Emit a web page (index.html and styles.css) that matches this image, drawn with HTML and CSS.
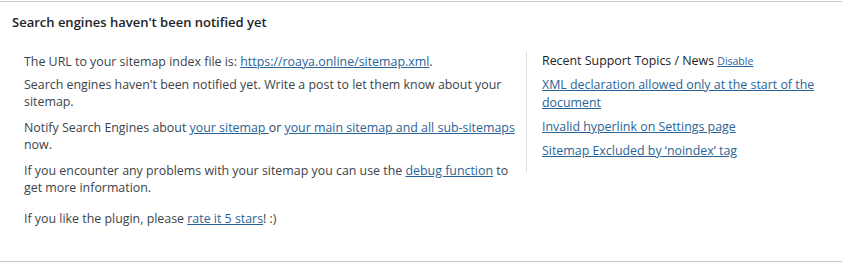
FILE: index.html
```html
<!DOCTYPE html>
<html lang="en">
<head>
<meta charset="utf-8">
<title>Sitemap status</title>
<link rel="stylesheet" href="styles.css">
</head>
<body>
<div class="postbox">
  <h2 class="hndle">Search engines haven't been notified yet</h2>
  <div class="inside">
    <div class="main">
      <p class="first">The URL to your sitemap index file is: <a href="#">https://roaya.online/sitemap.xml</a>.</p>
      <p>Search engines haven't been notified yet. Write a post to let them know about your sitemap.</p>
      <p>Notify Search Engines about <a href="#">your sitemap </a>or <a href="#">your main sitemap and all sub-sitemaps</a> now.</p>
      <p>If you encounter any problems with your sitemap you can use the <a href="#">debug function</a> to get more information.</p>
      <p class="rate">If you like the plugin, please <a href="#">rate it 5 stars</a>! :)</p>
    </div>
    <div class="side">
      <div class="side-title">Recent Support Topics / News <a href="#" class="small">Disable</a></div>
      <ul class="topics">
        <li><a href="#">XML declaration allowed only at the start of the document</a></li>
        <li><a href="#">Invalid hyperlink on Settings page</a></li>
        <li><a href="#">Sitemap Excluded by ‘noindex’ tag</a></li>
      </ul>
    </div>
  </div>
</div>
</body>
</html>
```
FILE: styles.css
```css
html, body {
  margin: 0;
  padding: 0;
  background: #fff;
}
body {
  font-family: "Open Sans", "Noto Sans", "Liberation Sans", sans-serif;
  font-size: 12.4px;
  color: #3c434a;
}
.postbox {
  margin-top: 1px;
  height: 259px;
  border-top: 1px solid #c9cacc;
  border-bottom: 1px solid #c3c4c7;
}
.hndle {
  margin: 0;
  padding: 11px 12px 0;
  font-size: 13px;
  font-weight: 600;
  line-height: 19px;
  color: #1d2327;
}
.inside {
  display: flex;
  align-items: flex-start;
  padding: 21px 12px 0 24px;
}
.main {
  width: 494px;
  flex: none;
}
.main p {
  margin: 0 0 9px;
  line-height: 17px;
}
.main p.first {
  margin-bottom: 6px;
}
.main p.rate {
  margin-top: 14px;
}
a {
  color: #2a6496;
  text-decoration: underline;
}
.side {
  margin-left: 8px;
  border-left: 1px solid #dcdcde;
  padding: 0 0 6px 15px;
  margin-top: -1px;
  flex: 1;
}
.side-title {
  line-height: 18px;
  font-weight: 400;
  color: #1d2327;
  margin-bottom: 6px;
}
.side-title .small {
  font-size: 10.5px;
}
.topics {
  list-style: none;
  margin: 0;
  padding: 0;
  width: 284px;
}
.topics li {
  margin: 0 0 6px;
  line-height: 18px;
}
```
